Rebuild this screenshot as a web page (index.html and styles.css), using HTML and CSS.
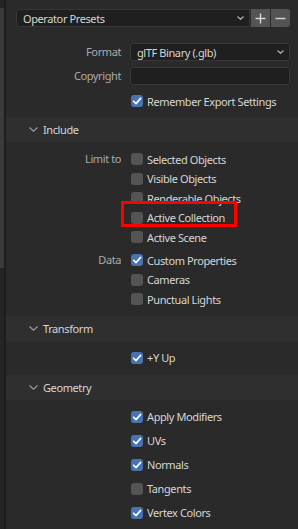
FILE: index.html
```html
<!DOCTYPE html>
<html>
<head>
<meta charset="utf-8">
<link rel="stylesheet" href="styles.css">
</head>
<body>
<div class="app">
  <div class="gutter"><div class="thumb"></div></div>
  <div class="panel">
    <div class="presets">
      <div class="select">
        <span>Operator Presets</span>
        <svg class="dd" width="7" height="4" viewBox="0 0 7 4"><path d="M0.5 0.5 L3.5 3.3 L6.5 0.5" fill="none" stroke="#b0b0b0" stroke-width="1.2"/></svg>
      </div>
      <div class="btn"><svg width="11" height="11" viewBox="0 0 11 11"><path d="M5.5 0.5 V10.5 M0.5 5.5 H10.5" stroke="#d6d6d6" stroke-width="1.4"/></svg></div>
      <div class="btn"><svg width="11" height="11" viewBox="0 0 11 11"><path d="M0.5 5.5 H10.5" stroke="#d6d6d6" stroke-width="1.4"/></svg></div>
    </div>

    <div class="form top">
      <div class="label">Format</div>
      <div class="select">
        <span>glTF Binary (.glb)</span>
        <svg class="dd" width="7" height="4" viewBox="0 0 7 4"><path d="M0.5 0.5 L3.5 3.3 L6.5 0.5" fill="none" stroke="#b0b0b0" stroke-width="1.2"/></svg>
      </div>
      <div class="label">Copyright</div>
      <div class="field"></div>
      <div></div>
      <div class="check on"><span class="box"></span>Remember Export Settings</div>
    </div>

    <div class="header"><svg width="9" height="5" viewBox="0 0 9 5"><path d="M0.5 0.5 L4.5 4.2 L8.5 0.5" fill="none" stroke="#9a9a9a" stroke-width="1.2"/></svg>Include</div>
    <div class="section include">
      <div class="form rows">
        <div class="label">Limit to</div>
        <div class="check"><span class="box"></span>Selected Objects</div>
        <div></div>
        <div class="check"><span class="box"></span>Visible Objects</div>
        <div></div>
        <div class="check"><span class="box"></span>Renderable Objects</div>
        <div></div>
        <div class="check marked"><span class="box"></span>Active Collection<span class="highlight"></span></div>
        <div></div>
        <div class="check"><span class="box"></span>Active Scene</div>
      </div>
      <div class="form rows data">
        <div class="label">Data</div>
        <div class="check on"><span class="box"></span>Custom Properties</div>
        <div></div>
        <div class="check"><span class="box"></span>Cameras</div>
        <div></div>
        <div class="check"><span class="box"></span>Punctual Lights</div>
      </div>
    </div>

    <div class="header"><svg width="9" height="5" viewBox="0 0 9 5"><path d="M0.5 0.5 L4.5 4.2 L8.5 0.5" fill="none" stroke="#9a9a9a" stroke-width="1.2"/></svg>Transform</div>
    <div class="section transform">
      <div class="form rows">
        <div></div>
        <div class="check on"><span class="box"></span>+Y Up</div>
      </div>
    </div>

    <div class="header"><svg width="9" height="5" viewBox="0 0 9 5"><path d="M0.5 0.5 L4.5 4.2 L8.5 0.5" fill="none" stroke="#9a9a9a" stroke-width="1.2"/></svg>Geometry</div>
    <div class="section geo">
      <div class="form rows tall">
        <div></div>
        <div class="check on"><span class="box"></span>Apply Modifiers</div>
        <div></div>
        <div class="check on"><span class="box"></span>UVs</div>
        <div></div>
        <div class="check on"><span class="box"></span>Normals</div>
        <div></div>
        <div class="check"><span class="box"></span>Tangents</div>
        <div></div>
        <div class="check on"><span class="box"></span>Vertex Colors</div>
      </div>
    </div>
  </div>
</div>
</body>
</html>
```

FILE: styles.css
```css
html, body {
  margin: 0;
  padding: 0;
  background: #2a2a2a;
}
body {
  width: 298px;
  height: 529px;
  overflow: hidden;
  font-family: "Noto Sans", "DejaVu Sans", sans-serif;
  font-size: 11px;
  letter-spacing: -0.4px;
  color: #d6d6d6;
}
.app {
  display: flex;
  height: 529px;
}
.gutter {
  width: 4px;
  flex: none;
  background: #242424;
  border-right: 2px solid #1d1d1d;
  padding-top: 8px;
  box-sizing: content-box;
}
.thumb {
  width: 4px;
  height: 260px;
  background: #3b3b3b;
}
.panel {
  flex: 1;
  display: flex;
  flex-direction: column;
  background: #2a2a2a;
}
.presets {
  display: flex;
  margin: 9px 8px 0 10px;
  height: 18px;
}
.select {
  flex: 1;
  display: flex;
  align-items: center;
  justify-content: space-between;
  background: #1f1f1f;
  border: 1px solid #363636;
  border-radius: 3px;
  box-sizing: border-box;
  padding: 0 5px 0 6px;
  color: #d6d6d6;
}
.presets .select {
  border-radius: 3px 0 0 3px;
}
.btn {
  width: 19px;
  flex: none;
  display: flex;
  align-items: center;
  justify-content: center;
  background: #545454;
  margin-left: 1px;
}
.btn:last-child {
  border-radius: 0 3px 3px 0;
}
.form {
  display: grid;
  grid-template-columns: 115px 160px;
  column-gap: 9px;
  margin-right: 8px;
}
.top {
  margin-top: 16px;
  grid-template-rows: 18px 18px 20px;
  row-gap: 6px;
  margin-bottom: 6px;
}
.label {
  text-align: right;
  color: #aaaaaa;
  line-height: 18px;
}
.rows .label {
  line-height: 19.5px;
}
.field {
  background: #1f1f1f;
  border: 1px solid #363636;
  border-radius: 3px;
}
.check {
  position: relative;
  display: flex;
  align-items: center;
  height: 18px;
  color: #d6d6d6;
  white-space: nowrap;
}
.top .check {
  height: 20px;
}
.rows .check {
  height: 19.5px;
}
.tall .check {
  height: 24px;
}
.box {
  width: 12px;
  height: 12px;
  flex: none;
  border-radius: 3px;
  background: #545454;
  margin: 0 4px 0 1px;
  box-sizing: border-box;
}
.on .box {
  background: #4772b3 url("data:image/svg+xml;utf8,<svg xmlns='http://www.w3.org/2000/svg' width='12' height='12' viewBox='0 0 12 12'><path d='M2.6 6.2 L5 8.6 L9.6 3.4' fill='none' stroke='white' stroke-width='1.6' stroke-linecap='round' stroke-linejoin='round'/></svg>") center/12px 12px no-repeat;
}
.header {
  height: 25px;
  flex: none;
  display: flex;
  align-items: center;
  background: #2f2f2f;
  padding-left: 23px;
  color: #d6d6d6;
}
.header svg {
  margin-right: 5px;
}
.section {
  flex: none;
}
.include {
  padding: 7.25px 0 7.25px;
}
.data {
  margin-top: 3.5px;
}
.transform {
  padding: 6.75px 0 7.75px;
}
.geo {
  padding-top: 4.5px;
}
.highlight {
  position: absolute;
  left: -9px;
  top: -6.5px;
  width: 116px;
  height: 26px;
  border: 3px solid #ff0000;
  box-sizing: border-box;
}
```
